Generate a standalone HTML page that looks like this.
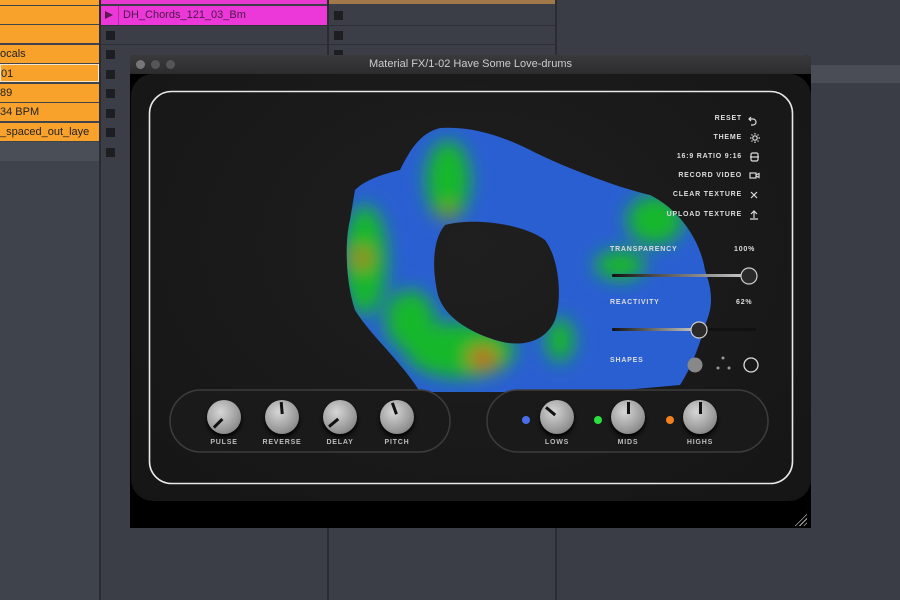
<!DOCTYPE html>
<html><head><meta charset="utf-8"><style>
*{margin:0;padding:0;box-sizing:border-box}
body{width:900px;height:600px;overflow:hidden;background:#3b3e46;font-family:"Liberation Sans",sans-serif;position:relative}
.abs{position:absolute}
.row{position:absolute;left:0;width:99px;height:18px;background:#f8a22c;color:#222;font-size:11px;line-height:18px;white-space:nowrap;overflow:hidden}
.sq{position:absolute;width:9px;height:9px;background:#1c1e22}
.lbl{position:absolute;color:#ddd;font-size:7px;letter-spacing:.8px;font-weight:bold;text-align:right}
.knob{position:absolute;width:34px;height:34px;border-radius:50%;background:radial-gradient(circle at 40% 35%,#d6d6d6,#9a9a9a 60%,#6a6a6a);box-shadow:0 3px 4px #000}
.knob i{position:absolute;left:16px;top:2px;width:3px;height:12px;background:#111;transform-origin:1.5px 15px}
.kl{position:absolute;color:#bbb;font-size:7px;letter-spacing:.8px;font-weight:bold;text-align:center;width:60px}
</style></head><body>
<div class="abs" style="left:0;top:0;width:99px;height:600px;background:#3f434b"></div>
<div class="abs" style="left:99px;top:0;width:2px;height:600px;background:#2a2c31"></div>
<div class="abs" style="left:327px;top:0;width:2px;height:600px;background:#2a2c31"></div>
<div class="abs" style="left:555px;top:0;width:2px;height:600px;background:#2a2c31"></div>
<div class="abs" style="left:557px;top:0;width:343px;height:600px;background:#3a3d45"></div>
<div class="abs" style="left:810px;top:65px;width:90px;height:18px;background:#4a4d56"></div>
<div class="abs" style="left:329px;top:0;width:226px;height:4px;background:#a0784a"></div>
<div class="abs" style="left:101px;top:0;width:226px;height:4px;background:#e83ad0"></div>
<div class="row" style="top:0;height:5px"></div>
<div class="row" style="top:6px"></div>
<div class="row" style="top:25px"></div>
<div class="row" style="top:45px">ocals</div>
<div class="row" style="top:64px;border:1px solid #f4e6c8">01</div>
<div class="row" style="top:84px">89</div>
<div class="row" style="top:103px">34 BPM</div>
<div class="row" style="top:123px">_spaced_out_laye</div>
<div class="abs" style="left:0;top:142px;width:99px;height:19px;background:#4a4e56"></div>
<div class="abs" style="left:101px;top:6px;width:226px;height:19px;background:#ec38d8;color:#4a1a44;font-size:11px;line-height:19px;padding-left:22px">DH_Chords_121_03_Bm</div>
<div class="abs" style="left:105px;top:11px;width:0;height:0;border-left:8px solid #5a1a50;border-top:4px solid transparent;border-bottom:4px solid transparent"></div>
<div class="abs" style="left:118px;top:6px;width:1px;height:19px;background:#b02aa0"></div>
<div class="sq" style="left:334px;top:11px"></div>
<div class="sq" style="left:106px;top:31px"></div><div class="sq" style="left:334px;top:31px"></div>
<div class="sq" style="left:106px;top:50px"></div><div class="sq" style="left:334px;top:50px"></div>
<div class="sq" style="left:106px;top:70px"></div><div class="sq" style="left:106px;top:89px"></div>
<div class="sq" style="left:106px;top:109px"></div><div class="sq" style="left:106px;top:128px"></div>
<div class="sq" style="left:106px;top:148px"></div>
<div class="abs" style="left:101px;top:25px;width:454px;height:1px;background:#2e3036"></div>
<div class="abs" style="left:101px;top:44px;width:454px;height:1px;background:#2e3036"></div>

<div class="abs" style="left:130px;top:55px;width:681px;height:473px;background:#000;border-radius:6px 6px 0 0;overflow:hidden">
 <div class="abs" style="left:0;top:0;width:681px;height:19px;background:linear-gradient(#3a3a3c,#2c2c2e);color:#ccc;font-size:11px;line-height:19px;text-align:center">Material FX/1-02 Have Some Love-drums</div>
 <div class="abs" style="left:6px;top:5px;width:9px;height:9px;border-radius:50%;background:#777"></div>
 <div class="abs" style="left:21px;top:5px;width:9px;height:9px;border-radius:50%;background:#555"></div>
 <div class="abs" style="left:36px;top:5px;width:9px;height:9px;border-radius:50%;background:#555"></div>
 <div class="abs" style="left:1px;top:19px;width:680px;height:427px;border-radius:22px;background:radial-gradient(ellipse at 50% 40%,#1f1f1f,#151515)"></div>
</div>
<div class="abs" style="left:793px;top:512px;width:14px;height:14px;background:repeating-linear-gradient(135deg,transparent 0 2px,#aaa 2px 3px);clip-path:polygon(100% 0,100% 100%,0 100%)"></div>

<svg class="abs" style="left:0;top:0" width="900" height="600">
 <defs>
  <clipPath id="b"><path clip-rule="evenodd" d="M355 190 C365 180 380 175 400 170 C410 150 420 133 440 128 C470 126 500 135 530 150 C570 170 620 188 650 195 C680 210 700 240 705 270 C712 290 714 305 705 325 C700 345 690 370 680 385 L600 392 L420 392 C400 360 370 335 355 310 C345 280 345 240 350 220 Z M445 225 C470 218 520 222 545 240 C560 260 562 300 555 320 C545 343 520 348 495 340 C470 332 445 318 438 295 C432 270 432 240 445 225 Z"/></clipPath>
  <filter id="f"><feGaussianBlur stdDeviation="9"/></filter>
  <linearGradient id="g"><stop offset="0" stop-color="#111"/><stop offset="1" stop-color="#ccc"/></linearGradient>
 </defs>
 <g clip-path="url(#b)">
  <rect x="330" y="120" width="400" height="280" fill="#2a5fd2"/>
  <g filter="url(#f)">
   <ellipse cx="448" cy="180" rx="22" ry="40" fill="#14b82a"/>
   <ellipse cx="365" cy="260" rx="22" ry="55" fill="#14b82a"/>
   <ellipse cx="460" cy="350" rx="55" ry="28" fill="#14b82a"/>
   <ellipse cx="410" cy="320" rx="25" ry="30" fill="#14b82a"/>
   <ellipse cx="655" cy="220" rx="28" ry="25" fill="#14b82a"/>
   <ellipse cx="620" cy="265" rx="25" ry="15" fill="#14b82a"/>
   <ellipse cx="560" cy="340" rx="14" ry="22" fill="#14b82a"/>
   <ellipse cx="362" cy="258" rx="8" ry="10" fill="#c05a20"/>
   <ellipse cx="483" cy="358" rx="14" ry="10" fill="#d0501a"/>
   <ellipse cx="448" cy="212" rx="6" ry="8" fill="#9a7a20"/>
  </g>
 </g>
 <rect x="149.5" y="91.5" width="643" height="392" rx="22" fill="none" stroke="#e8e8e8" stroke-width="1.6"/>
 <g stroke="#ddd" stroke-width="1.2" fill="none">
  <path d="M751 117 l-2 2 2 2 M749 119 h4 a3 3 0 0 1 0 6 h-2"/>
  <circle cx="755" cy="138" r="2.2"/><path d="M755 133v1.5M755 141.5v1.5M750 138h1.5M758.5 138h1.5M751.5 134.5l1 1M757.5 140.5l1 1M751.5 141.5l1-1M757.5 135.5l1-1"/>
  <rect x="751" y="153" width="7" height="8" rx="1.5"/><path d="M750 157h9"/>
  <rect x="750" y="173" width="6" height="5"/><path d="M756 175l3-1.5v4l-3-1.5"/>
  <path d="M751 192l6 6M757 192l-6 6"/>
  <path d="M754 218v-7M751 214l3-3 3 3M750 219h8"/>
 </g>
 <rect x="612" y="274" width="144" height="3" rx="1.5" fill="#111"/>
 <rect x="612" y="274" width="136" height="3" rx="1.5" fill="url(#g)"/>
 <circle cx="749" cy="276" r="8" fill="#2a2a2a" stroke="#ccc" stroke-width="1.2"/>
 <rect x="612" y="328" width="144" height="3" rx="1.5" fill="#111"/>
 <rect x="612" y="328" width="86" height="3" rx="1.5" fill="url(#g)"/>
 <circle cx="699" cy="330" r="8" fill="#2a2a2a" stroke="#ccc" stroke-width="1.2"/>
 <circle cx="695" cy="365" r="7.5" fill="#888"/>
 <circle cx="723" cy="358" r="1.5" fill="#999"/><circle cx="718" cy="368" r="1.5" fill="#999"/><circle cx="729" cy="368" r="1.5" fill="#999"/>
 <circle cx="751" cy="365" r="7" fill="none" stroke="#ddd" stroke-width="1.3"/>
 <rect x="170" y="390" width="280" height="62" rx="31" fill="#1a1a1a" stroke="#3c3c3c" stroke-width="1.5"/>
 <rect x="487" y="390" width="281" height="62" rx="31" fill="#1a1a1a" stroke="#3c3c3c" stroke-width="1.5"/>
 <circle cx="526" cy="420" r="4" fill="#4a6ee8"/>
 <circle cx="598" cy="420" r="4" fill="#2be040"/>
 <circle cx="670" cy="420" r="4" fill="#f08020"/>
</svg>

<div class="knob" style="left:207px;top:400px"><i style="transform:rotate(-135deg)"></i></div>
<div class="knob" style="left:265px;top:400px"><i style="transform:rotate(-5deg)"></i></div>
<div class="knob" style="left:323px;top:400px"><i style="transform:rotate(-130deg)"></i></div>
<div class="knob" style="left:380px;top:400px"><i style="transform:rotate(-20deg)"></i></div>
<div class="knob" style="left:540px;top:400px"><i style="transform:rotate(-50deg)"></i></div>
<div class="knob" style="left:611px;top:400px"><i style="transform:rotate(0deg)"></i></div>
<div class="knob" style="left:683px;top:400px"><i style="transform:rotate(0deg)"></i></div>
<div class="kl" style="left:194px;top:439px">PULSE</div>
<div class="kl" style="left:252px;top:439px">REVERSE</div>
<div class="kl" style="left:310px;top:439px">DELAY</div>
<div class="kl" style="left:367px;top:439px">PITCH</div>
<div class="kl" style="left:527px;top:439px">LOWS</div>
<div class="kl" style="left:598px;top:439px">MIDS</div>
<div class="kl" style="left:670px;top:439px">HIGHS</div>

<div class="lbl" style="right:158px;top:115px">RESET</div>
<div class="lbl" style="right:158px;top:134px">THEME</div>
<div class="lbl" style="right:158px;top:153px">16:9 RATIO 9:16</div>
<div class="lbl" style="right:158px;top:172px">RECORD VIDEO</div>
<div class="lbl" style="right:158px;top:191px">CLEAR TEXTURE</div>
<div class="lbl" style="right:158px;top:211px">UPLOAD TEXTURE</div>
<div class="lbl" style="left:610px;top:246px">TRANSPARENCY</div>
<div class="lbl" style="left:734px;top:246px">100%</div>
<div class="lbl" style="left:610px;top:299px">REACTIVITY</div>
<div class="lbl" style="left:736px;top:299px">62%</div>
<div class="lbl" style="left:610px;top:357px">SHAPES</div>
</body></html>
